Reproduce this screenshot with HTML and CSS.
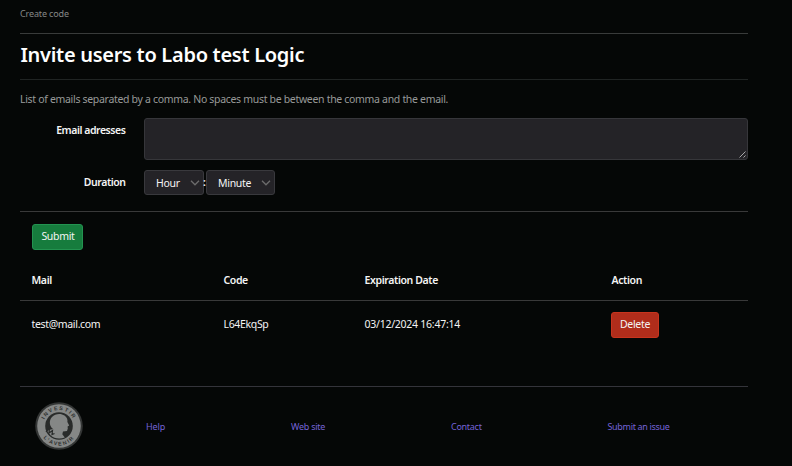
FILE: index.html
```html
<!DOCTYPE html>
<html lang="en">
<head>
<meta charset="utf-8">
<title>Invite users</title>
<link rel="stylesheet" href="styles.css">
</head>
<body>
<main class="page">
  <nav class="crumb"><span>Create code</span></nav>
  <h1 class="title"><span>Invite users to Labo test Logic</span></h1>
  <p class="hint"><span>List of emails separated by a comma. No spaces must be between the comma and the email.</span></p>
  <form class="form">
    <div class="row">
      <label class="label label-mail" for="emails">Email adresses</label>
      <div class="area" id="emails">
        <svg class="grip" width="7" height="7" viewBox="0 0 7 7"><path d="M.5 6.500l6-6M4.500 6.500l2-2" stroke="#b8b8b8" stroke-width=".9" fill="none"/></svg>
      </div>
    </div>
    <div class="row row-duration">
      <span class="label label-duration">Duration</span>
      <div class="select select-hour"><span>Hour</span><svg width="10" height="6" viewBox="0 0 10 6"><path d="M1 .8l4 4 4-4" fill="none" stroke="#6c6c6c" stroke-width="1.300"/></svg></div>
      <span class="colon">:</span>
      <div class="select select-minute"><span>Minute</span><svg width="10" height="6" viewBox="0 0 10 6"><path d="M1 .8l4 4 4-4" fill="none" stroke="#6c6c6c" stroke-width="1.300"/></svg></div>
    </div>
    <div class="actions"><button class="btn btn-submit" type="button">Submit</button></div>
  </form>
  <section class="table">
    <div class="tr th"><span>Mail</span><span>Code</span><span>Expiration Date</span><span>Action</span></div>
    <div class="tr td"><span>test@mail.com</span><span>L64EkqSp</span><span class="date">03/12/2024 16:47:14</span><button class="btn btn-delete" type="button">Delete</button></div>
  </section>
  <footer class="footer">
    <svg class="seal" width="48" height="48" viewBox="0 0 48 48">
      <defs>
        <path id="arc-top" d="M8 24a16 16 0 0 1 32 0"/>
        <path id="arc-bottom" d="M4.500 24a19.500 19.500 0 0 0 39 0"/>
      </defs>
      <circle cx="24" cy="24" r="23.800" fill="#343635"/>
      <circle cx="24" cy="24" r="21.800" fill="#858786"/>
      <circle cx="24" cy="24" r="13.800" fill="#292b2a"/>
      <path d="M18 27c-4-3-4-9-1-12 3-3.500 9-4 12.500-1.500 2.500 1.800 3.300 4 2.900 6.500l1.800 3.600-1.600.8.200 2-.8 2.600-4 .4-.7 2.800 2.500 3.200c-5 2-11 1-14-2l-4-5z" fill="#858786"/>
      <path d="M11 30l3.500-4-.5 5 3.500-2.500-.5 4 2.500-1" fill="none" stroke="#292b2a" stroke-width="1.200"/>
      <text class="seal-text"><textPath href="#arc-top" startOffset="50%">INVESTIR</textPath></text>
      <text class="seal-text"><textPath href="#arc-bottom" startOffset="50%">L'AVENIR</textPath></text>
    </svg>
    <a>Help</a><a class="f-web">Web site</a><a class="f-contact">Contact</a><a class="f-issue">Submit an issue</a>
  </footer>
</main>
</body>
</html>
```
FILE: styles.css
```css
* { box-sizing: border-box; }
body {
  margin: 0;
  height: 466px;
  overflow: hidden;
  background: #050706;
  color: #f4f4f4;
  font: 10.5px/16px "Noto Sans", "Open Sans", sans-serif;
  white-space: nowrap;
}
.page { width: 728px; margin-left: 20px; }
.crumb { height: 34px; padding-top: 6px; border-bottom: 1px solid #393b3a; color: #858786; font-size: 9px; letter-spacing: -.14px; }
.title { height: 46px; margin: 0; padding: 8px 0 0 .5px; border-bottom: 1px solid #202423; color: #fff; font-size: 20px; line-height: 26px; font-weight: 600; letter-spacing: -.29px; }
.hint { height: 38px; margin: 0; padding-top: 11px; color: #989a99; letter-spacing: -.315px; }
.form { margin: 0; }
.row { display: flex; height: 42px; }
.row-duration { height: 41px; margin-top: 10px; }
.label { width: 105.5px; margin-right: 18.5px; padding-top: 4px; text-align: right; font-weight: 600; letter-spacing: -.45px; }
.area { display: flex; align-items: flex-end; justify-content: flex-end; width: 604px; height: 42px; padding: 1px; border: 1px solid #36363a; border-radius: 3px; background: #242327; }
.select { display: flex; align-items: center; justify-content: space-between; height: 25px; padding: 0 3px 0 11px; border: 1px solid #39393d; border-radius: 3px; background: #242327; letter-spacing: -.3px; }
.select-hour { width: 60px; }
.select-minute { width: 69px; }
.colon { width: 2px; padding-top: 4px; font-weight: 600; text-indent: -1px; }
.actions { height: 51px; padding: 12px; border-top: 1px solid #393939; }
.btn { display: block; height: 26px; padding: 0 0 2px 1px; border: 1px solid; border-radius: 3px; color: #f4f4f4; font: inherit; letter-spacing: -.3px; text-align: center; }
.btn-submit { width: 51px; border-color: #239350; background: #167c3d; }
.btn-delete { width: 48px; margin-left: -1px; border-color: #c7341d; background: #b02d1b; }
.tr { display: grid; grid-template-columns: 192px 141px 247px 1fr; padding-left: 11.5px; align-items: center; letter-spacing: -.33px; }
.th { height: 39px; padding-bottom: 3px; border-bottom: 1px solid #393939; font-weight: 600; letter-spacing: -.38px; }
.td { height: 48px; padding-bottom: 1px; }
.td span { padding-bottom: 2px; }
.date { letter-spacing: -.25px; }
.footer { display: grid; grid-template-columns: 111px 145px 160px 156px 1fr; height: 80px; margin-top: 37px; padding-left: 15px; align-items: center; border-top: 1px solid #34343a; color: #7463d6; font-size: 9px; letter-spacing: -.08px; }
.f-web { letter-spacing: -.25px; }
.f-contact { letter-spacing: -.28px; }
.f-issue { padding-left: .5px; letter-spacing: -.33px; }
.seal { display: block; margin-bottom: 2px; }
.seal-text { font: 700 5.3px "Liberation Sans", sans-serif; letter-spacing: 1.5px; text-anchor: middle; fill: #303231; }
```
